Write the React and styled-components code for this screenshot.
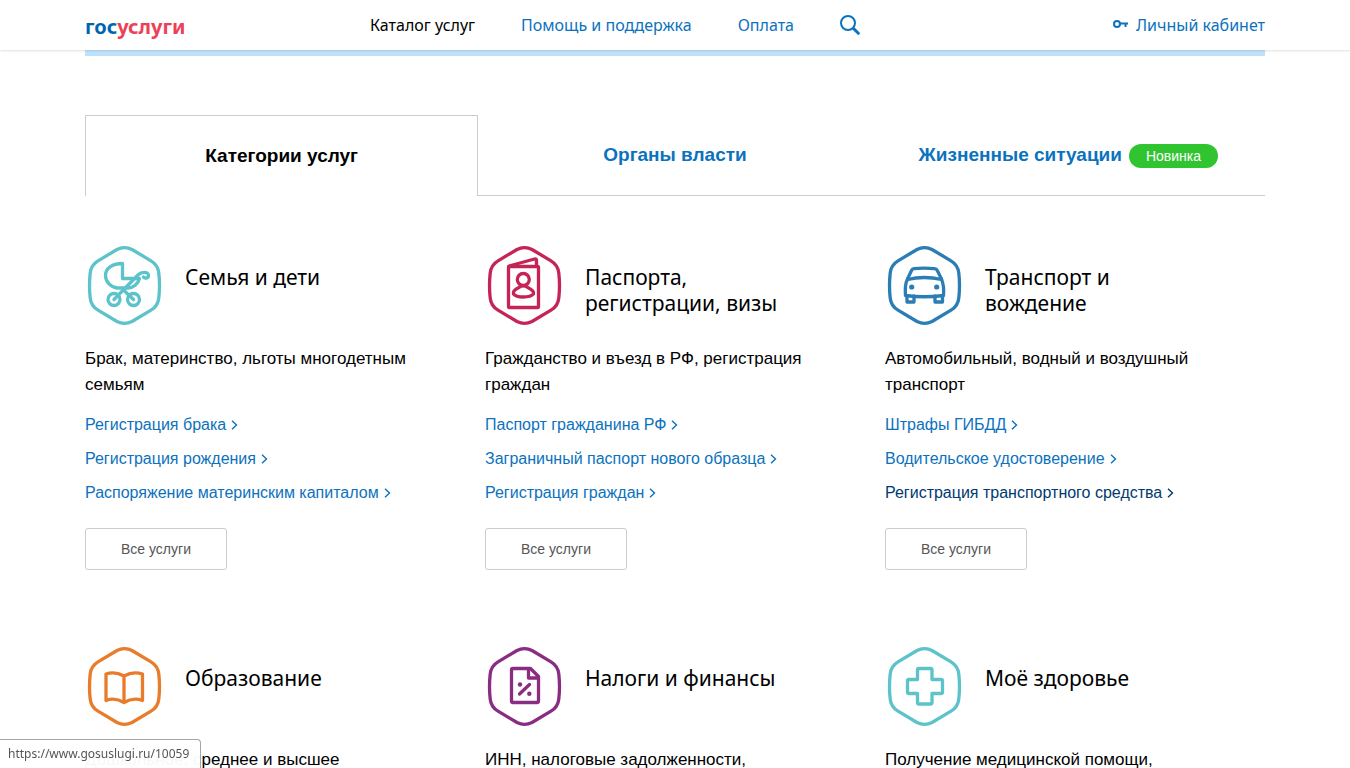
import React from "react";
import styled, { createGlobalStyle } from "styled-components";

const heading = '"Noto Sans", "Open Sans", sans-serif';
const blue = "#0b72bd";

const GlobalStyle = createGlobalStyle`
  *, *::before, *::after { box-sizing: border-box; }
  body {
    margin: 0;
    height: 100vh;
    overflow: hidden;
    background: #fff;
    color: #000;
    font: 16px/26px "Liberation Sans", Arial, sans-serif;
  }
  a { text-decoration: none; color: ${blue}; }
  h2, p, ul { margin: 0; padding: 0; }
`;

const Container = styled.div`
  max-width: 1180px;
  margin: 0 auto;
`;

const Header = styled.header`
  position: relative;
  background: #fff;
  box-shadow: 0 1px 2px rgba(0, 0, 0, 0.12);
`;

const HeaderRow = styled(Container)`
  display: flex;
  align-items: center;
  height: 50px;
`;

const Logo = styled.a`
  flex: 0 0 285px;
  font: bold 20px/26px ${heading};
  color: #0065b1;
  padding-top: 4px;

  span { color: #ee3f58; }
`;

const Nav = styled.nav`
  display: flex;
  align-items: center;
  gap: 46px;
  flex: 1;
`;

const NavLink = styled.a`
  display: flex;
  align-items: center;
  gap: 8px;
  font: 16px/26px ${heading};
  color: ${(p) => (p.$current ? "#000" : blue)};
`;

const IconButton = styled.button`
  display: flex;
  padding: 0;
  border: 0;
  background: none;
  color: ${blue};
`;

const Banner = styled(Container)`
  height: 6px;
  background: #bfe2fc;
`;

const Tabs = styled(Container)`
  display: grid;
  grid-template-columns: repeat(3, 1fr);
  height: 81px;
  margin-top: 59px;
`;

const Tab = styled.button`
  display: flex;
  align-items: center;
  justify-content: center;
  gap: 7px;
  padding: 0;
  border: 1px solid ${(p) => (p.$active ? "#ccc" : "transparent")};
  border-bottom-color: ${(p) => (p.$active ? "transparent" : "#ccc")};
  border-width: ${(p) => (p.$active ? "1px 1px 0" : "0 0 1px")};
  background: none;
  font: bold 19px/26px "Liberation Sans", Arial, sans-serif;
  color: ${(p) => (p.$active ? "#000" : blue)};
`;

const Badge = styled.span`
  padding: 0 17px;
  margin-top: 2px;
  border-radius: 12px;
  background: #31c431;
  color: #fff;
  font-size: 14px;
  font-weight: normal;
  line-height: 24px;
`;

const Grid = styled(Container)`
  display: grid;
  grid-template-columns: repeat(3, 1fr);
  gap: 77px 20px;
  margin-top: 50px;
`;

const CardHead = styled.div`
  display: flex;
  gap: 20px;
  height: 80px;
  margin-bottom: 20px;
  padding-right: 60px;
`;

const CardIcon = styled.svg`
  flex: none;
  width: 80px;
  height: 80px;
  fill: none;
  stroke: ${(p) => p.$tone};
  stroke-width: 3.3;
  stroke-linecap: round;
  stroke-linejoin: round;

  .dot { fill: ${(p) => p.$tone}; stroke: none; }
`;

const CardTitle = styled.h2`
  padding-top: 18px;
  font: 21px/26px ${heading};
`;

const Description = styled.p`
  min-height: 52px;
  padding-right: 56px;
  font-size: 17px;
`;

const Links = styled.ul`
  display: grid;
  gap: 8px;
  margin-top: 14px;
  list-style: none;
`;

const ServiceLink = styled.a`
  display: inline-flex;
  align-items: center;
  gap: 5px;
  color: ${(p) => (p.$hovered ? "#003a70" : blue)};
`;

const AllButton = styled.button`
  width: 142px;
  height: 42px;
  margin-top: 22px;
  border: 1px solid #ccc;
  border-radius: 3px;
  background: #fff;
  color: #555;
  font: 14px/20px "Liberation Sans", Arial, sans-serif;
`;

const StatusBubble = styled.div`
  position: fixed;
  left: 0;
  bottom: 0;
  height: 29px;
  padding: 0 11px 0 8px;
  border: solid #a6a6a6;
  border-width: 1px 1px 0 0;
  border-radius: 0 4px 0 0;
  background: rgba(255, 255, 255, 0.97);
  color: #555;
  font: 12px/28px "Noto Sans", "Open Sans", sans-serif;
`;

const drawings = {
  pram: (
    <>
      <path d="M37.5 17.5V32.5H54.5C53 38 48.500 42 43 42H32C25.500 41 20.500 35.500 20.500 29.500C20.500 22.500 27 17.500 37.500 17.500Z" />
      <path d="M29 53.500L53 29C56 26 63.500 25 63.500 29.500C63.500 32 60.500 33 58.500 31" />
      <path d="M48.500 53.500L38.500 44" />
      <circle cx="29" cy="53.500" r="6" />
      <circle cx="48.500" cy="53.500" r="6" />
    </>
  ),
  passport: (
    <>
      <rect x="23.500" y="20.500" width="30" height="41" rx="1" />
      <path d="M24 20L49.500 13Q51.500 12.500 51.500 14.500V20" />
      <circle cx="38.300" cy="33.500" r="6" />
      <path d="M34 41.500C29.500 43.500 28 46 28.500 48C31.500 52 45 52 48.500 48C49 46 47 43.500 42.700 41.500C40 39.500 36.500 39.500 34 41.500Z" />
    </>
  ),
  car: (
    <>
      <path d="M22.500 33L26.500 24.500Q27.300 22.700 29 22.600Q39 21.800 49.500 22.600Q51.500 22.700 52.300 24.500L56.500 33" />
      <path d="M22.500 33.500Q39 29.500 56.500 33.500" />
      <path d="M22.500 33C20 38 20 44 20.500 49.500Q39 52 58.500 49.500C59 44 58.500 38 56.500 33" />
      <path d="M22 50V56H29V50M50 50V56H57.500V50" />
      <circle className="dot" cx="26.700" cy="41" r="2.600" />
      <circle className="dot" cx="51.700" cy="41" r="2.600" />
    </>
  ),
  book: (
    <path d="M39 29Q30 24 21 27V53.500Q30 50 39 55.500Q48 50 57.500 53.500V27Q48 24 39 29V55.500" />
  ),
  tax: (
    <>
      <path d="M45.500 21.500H28Q26.500 21.500 26.500 23V54Q26.500 55.500 28 55.500H52Q53.500 55.500 53.500 54V29.500L45.500 21.500H43.500V31H53.500" />
      <path d="M34.500 47L44.500 37.500" />
      <circle className="dot" cx="35" cy="37.500" r="2.200" />
      <circle className="dot" cx="44.300" cy="46.700" r="2.200" />
    </>
  ),
  cross: (
    <path d="M34 21.500H45.500Q47 21.500 47 23V32.500H56Q57.500 32.500 57.500 34V45Q57.500 46.500 56 46.500H47V55.500Q47 57 45.500 57H34Q32.500 57 32.500 55.500V46.500H24Q22.500 46.500 22.500 45V34Q22.500 32.500 24 32.500H32.500V23Q32.500 21.500 34 21.500Z" />
  ),
};

const cards = [
  {
    title: "Семья и дети",
    tone: "#5cc3cb",
    icon: "pram",
    text: "Брак, материнство, льготы многодетным семьям",
    links: ["Регистрация брака", "Регистрация рождения", "Распоряжение материнским капиталом"],
  },
  {
    title: "Паспорта, регистрации, визы",
    tone: "#c52456",
    icon: "passport",
    text: "Гражданство и въезд в РФ, регистрация граждан",
    links: ["Паспорт гражданина РФ", "Заграничный паспорт нового образца", "Регистрация граждан"],
  },
  {
    title: "Транспорт и вождение",
    tone: "#2a7db5",
    icon: "car",
    text: "Автомобильный, водный и воздушный транспорт",
    links: ["Штрафы ГИБДД", "Водительское удостоверение", "Регистрация транспортного средства"],
    hovered: 2,
  },
  { title: "Образование", tone: "#e97c2a", icon: "book", text: "Дошкольное, среднее и высшее" },
  { title: "Налоги и финансы", tone: "#8a2d82", icon: "tax", text: "ИНН, налоговые задолженности," },
  { title: "Моё здоровье", tone: "#5cc3cb", icon: "cross", text: "Получение медицинской помощи," },
];

const Chevron = () => (
  <svg width="7" height="10" viewBox="0 0 7 10" fill="none" stroke="currentColor" strokeWidth="1.400" aria-hidden="true">
    <path d="M1 0.800L5.500 5L1 9.200" />
  </svg>
);

function Card({ title, tone, icon, text, links = [], hovered }) {
  return (
    <section>
      <CardHead>
        <CardIcon $tone={tone} viewBox="0 0 80 80" aria-hidden="true">
          <path d="M32 3.500Q39.500 -0.200 47 3.500L66 14.800Q73 19 73.800 27Q75.200 39.500 73.800 52Q73 60 66 64.200L47 75.500Q39.500 79.200 32 75.500L13 64.200Q6 60 5.200 52Q3.800 39.500 5.200 27Q6 19 13 14.800Z" />
          {drawings[icon]}
        </CardIcon>
        <CardTitle>{title}</CardTitle>
      </CardHead>
      <Description>{text}</Description>
      {links.length > 0 && (
        <>
          <Links>
            {links.map((label, i) => (
              <li key={label}>
                <ServiceLink href="#" $hovered={i === hovered}>
                  {label}
                  <Chevron />
                </ServiceLink>
              </li>
            ))}
          </Links>
          <AllButton type="button">Все услуги</AllButton>
        </>
      )}
    </section>
  );
}

export default function App() {
  return (
    <>
      <GlobalStyle />
      <Header>
        <HeaderRow>
          <Logo href="#">гос<span>услуги</span></Logo>
          <Nav>
            <NavLink href="#" $current>Каталог услуг</NavLink>
            <NavLink href="#">Помощь и поддержка</NavLink>
            <NavLink href="#">Оплата</NavLink>
            <IconButton type="button" aria-label="Поиск">
              <svg width="20" height="20" viewBox="0 0 20 20" fill="none" stroke="currentColor" strokeLinecap="round">
                <circle cx="8" cy="8" r="7" strokeWidth="2" />
                <path d="M13.500 13.500L18.300 18.300" strokeWidth="3" />
              </svg>
            </IconButton>
          </Nav>
          <NavLink href="#">
            <svg width="15" height="10" viewBox="0 0 15 10" fill="none" stroke="currentColor" strokeWidth="2" aria-hidden="true">
              <circle cx="4" cy="4" r="3" />
              <path d="M7 3.500H15M12.500 3.500V7" />
            </svg>
            Личный кабинет
          </NavLink>
        </HeaderRow>
      </Header>
      <main>
        <Banner />
        <Tabs role="tablist">
          <Tab type="button" role="tab" aria-selected="true" $active>Категории услуг</Tab>
          <Tab type="button" role="tab" aria-selected="false">Органы власти</Tab>
          <Tab type="button" role="tab" aria-selected="false">
            Жизненные ситуации
            <Badge>Новинка</Badge>
          </Tab>
        </Tabs>
        <Grid>
          {cards.map((card) => (
            <Card key={card.title} {...card} />
          ))}
        </Grid>
      </main>
      <StatusBubble>https://www.gosuslugi.ru/10059</StatusBubble>
    </>
  );
}
